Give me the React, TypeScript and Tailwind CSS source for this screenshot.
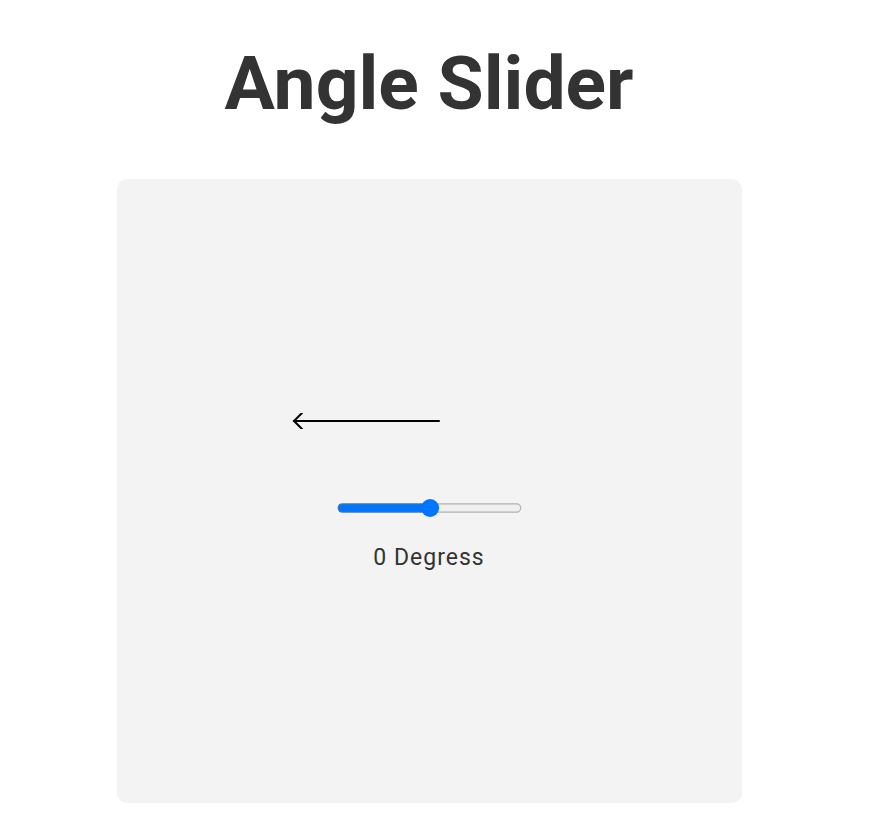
import { useState } from 'react';

export default function App() {
  const [angle, setAngle] = useState(0);

  return (
    <div className="flex min-h-screen flex-col items-center bg-white pr-[20px] font-['Roboto',sans-serif] text-[#333]">
      <h1 className="mt-[46px] text-[75px] font-bold leading-none">Angle Slider</h1>

      <div className="mt-[58px] flex h-[624px] w-[625px] flex-col items-center justify-center rounded-[10px] bg-[#f3f3f3]">
        <svg width="300" height="16" viewBox="0 0 300 16" className="shrink-0">
          <g transform={`rotate(${angle} 160 8)`} stroke="#000" strokeWidth="2" fill="none" strokeLinecap="round">
            <line x1="15" y1="8" x2="160" y2="8" />
            <polyline points="23,0 15,8 23,16" />
          </g>
        </svg>

        <input
          type="range"
          min={-180}
          max={180}
          value={angle}
          onChange={(e) => setAngle(Number(e.target.value))}
          className="mt-[71px] w-[155px] scale-[1.2] accent-[#0075ff]"
        />

        <p className="mt-[30px] text-[23px] leading-none tracking-[1px]">{angle} Degress</p>
      </div>
    </div>
  );
}
